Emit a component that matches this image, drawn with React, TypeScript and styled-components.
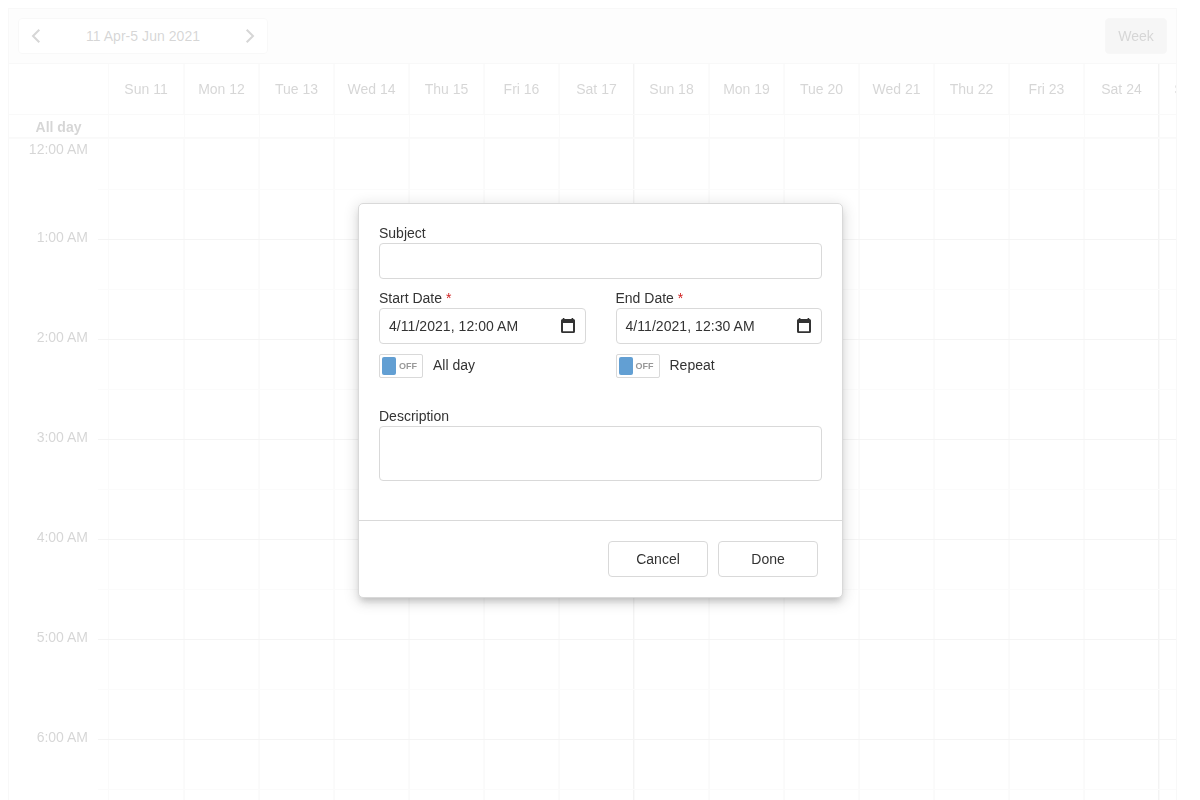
import React from "react";
import styled, { createGlobalStyle } from "styled-components";

const GlobalStyle = createGlobalStyle`
  * { box-sizing: border-box; }
  html, body { height: 100%; overflow: hidden; }
  body { margin: 0; background: #fff; color: #333; font: 14px/16px "Liberation Sans", Arial, sans-serif; }
  button, input, textarea { font: inherit; color: inherit; }
`;

const Page = styled.main`
  height: 800px;
  padding: 8px 23px 0 8px;
  display: grid;
  overflow: hidden;
`;

const Scheduler = styled.section`
  height: 900px;
  border: 1px solid #ddd;
  opacity: 0.2;
  overflow: hidden;
`;

const Toolbar = styled.header`
  height: 55px;
  padding: 9px 9px 0 9px;
  display: flex;
  justify-content: space-between;
  align-items: flex-start;
  background: #f5f5f5;
  border-bottom: 1px solid #ddd;
`;

const DateNav = styled.div`
  width: 250px;
  height: 36px;
  padding: 0 11px;
  display: flex;
  align-items: center;
  justify-content: space-between;
  background: #fff;
  border: 1px solid #ddd;
  border-radius: 4px;
  letter-spacing: 0.05px;
`;

const ViewButton = styled.button`
  width: 62px;
  height: 36px;
  padding: 0;
  background: #d0d0d0;
  border: 1px solid #d6d6d6;
  border-radius: 4px;
`;

const Row = styled.div<{ $height: number }>`
  display: flex;
  width: 1300px;
  height: ${(p) => p.$height}px;
  border-bottom: 1px solid #e2e2e2;
`;

const HeadLabel = styled.div`
  flex: 0 0 99px;
  padding: 4px 0 0;
  text-align: center;
  font-weight: bold;
`;

const Cell = styled.div<{ $weekEnd?: boolean; $single?: boolean }>`
  flex: 0 0 75px;
  display: flex;
  align-items: center;
  justify-content: center;
  border-left: 1px solid #e4e4e4;
  border-right: 1px solid ${(p) => (p.$weekEnd ? "#c4c4c4" : p.$single ? "transparent" : "#e8e8e8")};
  &:nth-child(2) { flex-basis: 76px; }
`;

const Body = styled.div`
  display: flex;
  width: 1300px;
  border-top: 1px solid #e4e4e4;
`;

const Hours = styled.div`
  flex: 0 0 89px;
  padding-top: 1px;
  text-align: right;
`;

const Hour = styled.div<{ $first?: boolean }>`
  height: ${(p) => (p.$first ? 88 : 100)}px;
  padding: 1px 10px 0 0;
`;

const Grid = styled.div`
  flex: 1;
`;

const Slot = styled.div<{ $hour?: boolean }>`
  display: flex;
  height: 50px;
  border-bottom: 1px solid ${(p) => (p.$hour ? "#c8c8c8" : "#ebebeb")};
  &:first-child { height: 51px; }
`;

const Gutter = styled.div`
  flex: 0 0 10px;
`;

const Overlay = styled.div`
  position: absolute;
  inset: 0;
  padding: 203px 0 0 358px;
`;

const Dialog = styled.form`
  width: 485px;
  height: 395px;
  border: 1px solid #d9d9d9;
  border-radius: 5px;
  background: #fff;
  box-shadow:
    0 5px 6px -3px rgba(0, 0, 0, 0.14),
    0 6px 10px 0 rgba(0, 0, 0, 0.06),
    0 3px 14px 2px rgba(0, 0, 0, 0.12);
`;

const Fields = styled.div`
  height: 316px;
  padding: 21px 20px 0;
`;

const Label = styled.label`
  display: block;
  height: 18px;
`;

const Required = styled.span`
  color: #d02020;
`;

const TextInput = styled.input`
  display: block;
  width: 100%;
  height: 36px;
  border: 1px solid #d9d9d9;
  border-radius: 4px;
  outline: 0;
`;

const TextArea = styled.textarea`
  display: block;
  width: 100%;
  height: 55px;
  resize: none;
  border: 1px solid #d9d9d9;
  border-radius: 4px;
  outline: 0;
`;

const Columns = styled.div`
  display: grid;
  grid-template-columns: 1fr 1fr;
  gap: 30px;
  margin: 11px 0 30px;
`;

const DateBox = styled.div`
  height: 36px;
  padding: 0 10px 0 9px;
  display: flex;
  align-items: center;
  justify-content: space-between;
  border: 1px solid #d9d9d9;
  border-radius: 4px;
  letter-spacing: 0.05px;
`;

const SwitchRow = styled.div`
  display: flex;
  gap: 10px;
  margin-top: 10px;
  line-height: 23px;
`;

const Switch = styled.div`
  width: 44px;
  height: 24px;
  padding: 2px;
  display: flex;
  align-items: center;
  gap: 3px;
  border: 1px solid #d9d9d9;
  border-radius: 2px;
  color: #999;
  font-size: 9px;
  font-weight: bold;
`;

const Thumb = styled.span`
  width: 14px;
  height: 18px;
  border-radius: 2px;
  background: #629fd3;
`;

const Footer = styled.footer`
  display: flex;
  justify-content: flex-end;
  gap: 10px;
  padding: 20px 24px 0;
  border-top: 1px solid #d9d9d9;
`;

const Button = styled.button`
  width: 100px;
  height: 36px;
  padding: 0;
  background: #fff;
  border: 1px solid #d9d9d9;
  border-radius: 4px;
`;

const days = ["Sun 11", "Mon 12", "Tue 13", "Wed 14", "Thu 15", "Fri 16", "Sat 17", "Sun 18", "Mon 19", "Tue 20", "Wed 21", "Thu 22", "Fri 23", "Sat 24", "Sun 25"];
const hours = ["12:00 AM", "1:00 AM", "2:00 AM", "3:00 AM", "4:00 AM", "5:00 AM", "6:00 AM"];

const Chevron = ({ next }: { next?: boolean }) => (
  <svg width="12" height="16" viewBox="0 0 12 16" fill="none" stroke="#333" strokeWidth="2">
    <path d={next ? "M2.7 1.7 9 8 2.7 14.3" : "M9.3 1.7 3 8 9.3 14.3"} />
  </svg>
);

const CalendarIcon = () => (
  <svg width="14" height="16" viewBox="0 0 14 16">
    <path fill="#333" fillRule="evenodd" d="M1.800 0h1.600v1h7.200V0h1.600v1h.3A1.500 1.500 0 0 1 14 2.500v11a1.500 1.500 0 0 1-1.500 1.500h-11A1.500 1.500 0 0 1 0 13.500v-11A1.500 1.500 0 0 1 1.500 1h.3zM2 5v8.200h10V5z" />
  </svg>
);

const Cells = ({ labels, single }: { labels?: boolean; single?: boolean }) => (
  <>
    {days.map((day, i) => (
      <Cell key={day} $weekEnd={i % 7 === 6} $single={single}>{labels ? day : null}</Cell>
    ))}
  </>
);

const DateField = ({ label, value, toggle }: { label: string; value: string; toggle: string }) => (
  <div>
    <Label>{label} <Required>*</Required></Label>
    <DateBox>{value}<CalendarIcon /></DateBox>
    <SwitchRow>
      <Switch><Thumb />OFF</Switch>
      {toggle}
    </SwitchRow>
  </div>
);

export default function App() {
  return (
    <>
      <GlobalStyle />
      <Page>
        <Scheduler>
          <Toolbar>
            <DateNav><Chevron />11 Apr-5 Jun 2021<Chevron next /></DateNav>
            <ViewButton>Week</ViewButton>
          </Toolbar>
          <Row $height={51}><HeadLabel /><Cells labels /></Row>
          <Row $height={23}><HeadLabel>All day</HeadLabel><Cells single /></Row>
          <Body>
            <Hours>{hours.map((h, i) => <Hour key={h} $first={i === 0}>{h}</Hour>)}</Hours>
            <Grid>
              {Array.from({ length: 14 }, (_, i) => (
                <Slot key={i} $hour={i % 2 === 1}><Gutter /><Cells /></Slot>
              ))}
            </Grid>
          </Body>
        </Scheduler>
      </Page>
      <Overlay>
        <Dialog>
          <Fields>
            <Label>Subject</Label>
            <TextInput />
            <Columns>
              <DateField label="Start Date" value="4/11/2021, 12:00 AM" toggle="All day" />
              <DateField label="End Date" value="4/11/2021, 12:30 AM" toggle="Repeat" />
            </Columns>
            <Label>Description</Label>
            <TextArea />
          </Fields>
          <Footer>
            <Button type="button">Cancel</Button>
            <Button type="button">Done</Button>
          </Footer>
        </Dialog>
      </Overlay>
    </>
  );
}
